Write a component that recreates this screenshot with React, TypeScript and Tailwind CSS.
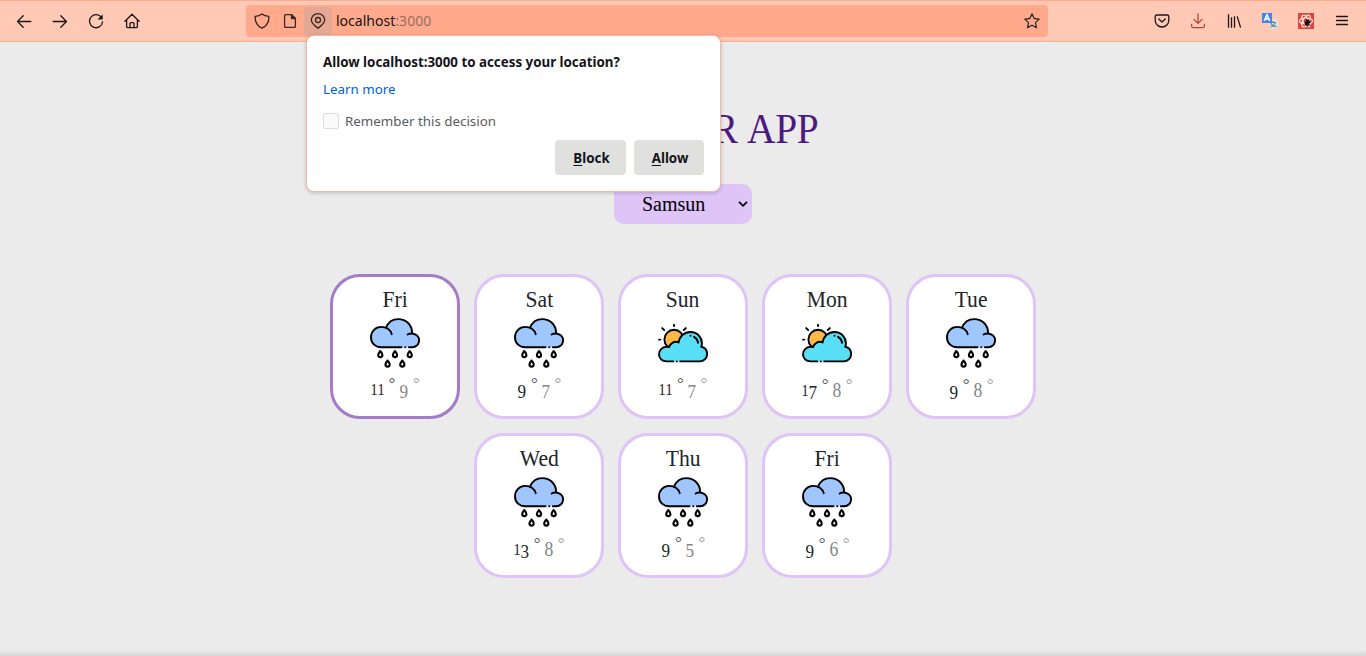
import type { ReactNode } from 'react';

type Kind = 'rain' | 'cloudy';
type Day = { name: string; kind: Kind; high: string; low: string; active?: boolean };

const days: Day[] = [
  { name: 'Fri', kind: 'rain', high: '11', low: '9', active: true },
  { name: 'Sat', kind: 'rain', high: '9', low: '7' },
  { name: 'Sun', kind: 'cloudy', high: '11', low: '7' },
  { name: 'Mon', kind: 'cloudy', high: '17', low: '8' },
  { name: 'Tue', kind: 'rain', high: '9', low: '8' },
  { name: 'Wed', kind: 'rain', high: '13', low: '8' },
  { name: 'Thu', kind: 'rain', high: '9', low: '5' },
  { name: 'Fri', kind: 'rain', high: '9', low: '6' },
];

function Icon({ children, className = '' }: { children: ReactNode; className?: string }) {
  return (
    <svg
      viewBox="0 0 16 16"
      className={`size-4 shrink-0 ${className}`}
      fill="none"
      stroke="currentColor"
      strokeWidth="1.3"
      strokeLinecap="round"
      strokeLinejoin="round"
    >
      {children}
    </svg>
  );
}

function RainIcon() {
  return (
    <svg viewBox="0 0 50 50" className="size-[50px]" fill="none" stroke="#000" strokeWidth="1.9" strokeLinecap="round">
      <path
        d="M11 29.2C5 29.2 1 25 1 19.3 1 13.3 5.500 8.900 11.200 8.900c1.700 0 3.300.3 4.800 1C18 4.500 22.500 1.100 28.300 1.100c7.800 0 13.800 5.900 13.800 13.700v.700c4.300 0 7 2.900 7 6.700 0 4.100-3 7-7 7z"
        fill="#9fc6ff"
        stroke="none"
      />
      <path d="M31.500 29.200H11C5 29.200 1 25 1 19.300 1 13.300 5.500 8.900 11.200 8.900c5.500 0 9.700 3 10.500 7.300" />
      <path d="M16 9.900C18 4.500 22.500 1.100 28.300 1.100c7.800 0 13.800 5.900 13.800 13.700" />
      <path d="M37.600 16.500c4.800-2.600 11.500.2 11.500 5.700 0 4.100-3 7-7 7h-3.200M35.200 29.200h.1" />
      {[
        [10.3, 33],
        [25, 33],
        [39.7, 33],
        [17.6, 42.5],
        [32.3, 42.5],
      ].map(([x, y]) => (
        <path
          key={x}
          transform={`translate(${x} ${y})`}
          d="M0 0C-.9 1.400-2.100 2.700-2.100 4a2.100 2.100 0 0 0 4.200 0C2.100 2.700.900 1.400 0 0Z"
          fill="#fff"
          strokeWidth="2.1"
          strokeLinejoin="round"
        />
      ))}
    </svg>
  );
}

function CloudyIcon() {
  return (
    <svg viewBox="0 0 50 50" className="size-[50px]" fill="none" stroke="#000" strokeWidth="1.9" strokeLinecap="round">
      <circle cx="16" cy="21.400" r="9.600" fill="#ffb947" />
      <path d="M16 6.800v1.300M4.200 10.100l2 2M27.800 10.100l-2 2M1 21.600h1.400" />
      <path
        d="M8.500 43.400C4 43.400 1 40.200 1 36.300s3-7.500 7.500-7.500c1 0 1.700.1 2.500.4C12 25 17 22.500 20.600 24.500 21.600 18 26.500 14 32.500 14c6.700 0 11.400 5 11.400 11.500 0 1.200-.1 2.200-.4 3.300 3.300.500 5.600 3.400 5.600 7.200 0 4.200-3.300 7.400-7.500 7.400z"
        fill="#59dff5"
        stroke="none"
      />
      <path
        d="M22.200 43.400h19.400c4.200 0 7.500-3.200 7.500-7.400 0-3.700-2.400-6.500-5.800-7.200.4-1 .6-2.100.6-3.300C43.900 19 39.200 14 32.500 14c-6 0-10.900 4-11.900 10.500C17 22.500 12 25 11 29.200c-.8-.3-1.500-.4-2.500-.4C4 28.800 1 32.400 1 36.300s3 7.100 7.500 7.100h6.800"
        strokeLinejoin="round"
      />
      <path d="M18.700 43.400h.1M32.500 17.800h.1M36 18.800c2.200 1.200 3.800 3.300 4.100 6" />
    </svg>
  );
}

const digitClass: Record<string, string> = {
  '1': 'text-[16px] w-[6.6px] -translate-y-px',
  '3': 'text-[19.5px] w-[8.5px] translate-y-[2px]',
  '5': 'text-[19.5px] w-[8.5px] translate-y-[2px]',
  '6': 'text-[20px] w-[9px]',
  '7': 'text-[19.5px] w-[8.5px] translate-y-[2px]',
  '8': 'text-[20px] w-[9px]',
  '9': 'text-[19.5px] w-[9.5px] translate-y-[2px]',
};

function Temp({ value, className }: { value: string; className: string }) {
  return (
    <span className={`flex items-baseline ${className}`}>
      {value.split('').map((c, i) => (
        <span key={i} className={`flex justify-center ${digitClass[c]}`}>
          <span className="scale-x-[0.88]">{c}</span>
        </span>
      ))}
      <span className="ml-[5px] mr-[4px] flex w-[6px] -translate-y-[7px] justify-center text-[17px] opacity-80">°</span>
    </span>
  );
}

function Card({ day }: { day: Day }) {
  return (
    <article
      className={`flex h-[145px] w-[130px] flex-col items-center rounded-[30px] border-[3px] bg-white ${
        day.active ? 'border-[#a37bc8]' : 'border-[#dec4f7]'
      }`}
    >
      <h2 className="mt-[7px] h-[34px] scale-x-[0.96] text-[22.5px] leading-[31px] text-[#212529]">{day.name}</h2>
      {day.kind === 'rain' ? <RainIcon /> : <CloudyIcon />}
      <div className="mt-[7px] flex h-[30px] items-baseline pl-[4px] leading-[30px]">
        <Temp value={day.high} className="text-[#212529]" />
        <Temp value={day.low} className="text-[#858585]" />
      </div>
    </article>
  );
}

function Toolbar() {
  return (
    <header className="flex h-[42px] shrink-0 items-center border-y border-t-[#ffaa8d] border-b-[#ffae92] bg-[#ffc9b6] text-[#1d1614]">
      <div className="flex w-[246px] gap-5 pl-4">
        <Icon><path d="M14.800 8.500H1.500M7.200 2.800 1.500 8.500l5.700 5.700" /></Icon>
        <Icon><path d="M1.200 8.500h13.300M8.800 2.800l5.700 5.700-5.700 5.700" /></Icon>
        <Icon>
          <path d="M13.600 4.800A6.500 6.500 0 1 0 14.500 9" />
          <path d="M14.700 1.300v5.100H9.600z" fill="currentColor" stroke="none" />
        </Icon>
        <Icon><path d="M.9 8.300 8 1.300l7.100 7M2.600 6.900v6.500c0 .700.500 1.200 1.200 1.200h8.400c.7 0 1.200-.5 1.200-1.200V6.900M6 14.500V10.600c0-.6.400-1 1-1h2c.600 0 1 .4 1 1v3.900" /></Icon>
      </div>
      <div className="flex h-8 w-[802px] items-center rounded bg-[#ffaa8d]">
        <Icon className="ml-2 text-[#3b2721]"><path d="M8 .9c1.700 1.500 4 2.300 6.900 2.500.2 5.700-2 9.400-6.900 11.700C3.100 12.800.9 9.100 1.100 3.400 4 3.200 6.300 2.400 8 .9Z" /></Icon>
        <Icon className="ml-3 text-[#3b2721]">
          <path d="M9.500 1.600H3.800c-.7 0-1.200.5-1.200 1.200v10.400c0 .7.5 1.200 1.200 1.200h8.400c.7 0 1.200-.5 1.200-1.200V5.500z" />
          <path d="M9.500 1.600v3.900h3.900z" fill="currentColor" />
        </Icon>
        <span className="ml-[6px] flex h-7 w-7 items-center justify-center rounded bg-[#e5a894]">
          <Icon className="text-[#3b2721]">
            <path d="M8 15.300C4.300 12.300 1.300 10.300 1.300 7A6.700 6.300 0 0 1 14.700 7c0 3.300-3 5.300-6.700 8.300Z" />
            <circle cx="8" cy="7" r="2.500" />
          </Icon>
        </span>
        <span className="ml-1 text-[14.05px] leading-5 text-[#20120e]">
          localhost<span className="text-[#9b6d5d]">:3000</span>
        </span>
        <Icon className="ml-auto mr-2 text-[#3b2721]"><path d="m8 .9 2.200 4.600 5 .6-3.700 3.500 1 5L8 12.200l-4.500 2.400 1-5L.8 6.100l5-.6z" /></Icon>
      </div>
      <div className="ml-auto flex gap-5 pr-4">
        <Icon>
          <path d="M2.800 2h10.400c.9 0 1.600.7 1.600 1.600v3.600a6.800 6.800 0 0 1-13.600 0V3.600C1.200 2.700 1.900 2 2.800 2Z" />
          <path d="m4.800 6 3.200 3 3.200-3" />
        </Icon>
        <Icon className="text-[#b1482c]"><path d="M8 .8v9.400M4 6.400l4 4 4-4M1.600 11.500v1.600c0 .900.600 1.500 1.500 1.500h9.800c.9 0 1.500-.6 1.500-1.500v-1.600" /></Icon>
        <Icon><path d="M2.500 1.200v13.500M5.500 4.200v10.500M8.500 3.200v11.500M11.200 3.400l3.400 11.200" strokeLinecap="butt" /></Icon>
        <svg viewBox="0 0 16 16" className="size-4">
          <path d="M6 6h9a1 1 0 0 1 1 1v9H8z" fill="#dce1df" />
          <path d="M8 9.500h6M11 8v1.500M13 9.500c-.5 3-2 4-4.500 4.500M9 10c.5 2 2.500 3.500 5.500 3.500" fill="none" stroke="#658996" strokeWidth="1.200" />
          <path d="M0 0h10v10H0z" fill="#4285f4" />
          <path d="M2.300 7.700 5 1.900l2.700 5.800M3.300 5.900h3.400" fill="none" stroke="#fff" strokeWidth="1.500" />
        </svg>
        <svg viewBox="0 0 16 16" className="size-4">
          <path d="M0 0h16v16H0z" fill="#dc4638" />
          <g fill="none" stroke="#f8dddd" strokeWidth="1.200">
            <ellipse cx="8" cy="8" rx="6.500" ry="2.900" />
            <ellipse cx="8" cy="8" rx="6.500" ry="2.900" transform="rotate(60 8 8)" />
            <ellipse cx="8" cy="8" rx="6.500" ry="2.900" transform="rotate(120 8 8)" />
          </g>
          <ellipse cx="9.300" cy="9.800" rx="2.300" ry="3.200" fill="#1c1412" transform="rotate(35 9.300 9.800)" />
          <path d="m6.500 8.500 6 4M8 7l5 2.500M7 11l3.500 3M8.500 7 7.500 5.500M10 7.500l1-1.500" stroke="#1c1412" strokeWidth=".8" />
        </svg>
        <Icon><path d="M2.500 3.500h11M2.500 7.500h11M2.500 11.500h11" /></Icon>
      </div>
    </header>
  );
}

function PermissionPopup() {
  return (
    <section className="absolute left-[306px] top-[35px] z-10 flex h-[157px] w-[415px] flex-col rounded-lg border border-[#f5b7a2] bg-white px-4 pt-4 text-[#15141a] shadow-[0_1px_4px_rgba(0,0,0,0.2)]">
      <h3 className="h-[20px] text-[13.33px] font-bold leading-5 whitespace-nowrap">
        Allow localhost:3000 to access your location?
      </h3>
      <a className="mt-[7px] h-5 text-[13.33px] leading-5 text-[#0061e0]">Learn more</a>
      <label className="mt-[12px] flex h-5 items-center gap-[6px] text-[13.33px] leading-5 text-[#5b5b5f]">
        <span className="size-4 rounded-[2px] border border-[#dedede] bg-[#fafafa]" />
        Remember this decision
      </label>
      <div className="mt-[9px] flex justify-end gap-2 text-[13.33px] font-bold">
        <button className="h-[35px] w-[71px] rounded bg-[#e0e0de] pl-[2px] pt-[2px]"><span className="underline underline-offset-2">B</span>lock</button>
        <button className="h-[35px] w-[70px] rounded bg-[#e0e0de] pl-[2px] pt-[2px]"><span className="underline underline-offset-2">A</span>llow</button>
      </div>
    </section>
  );
}

export default function App() {
  return (
    <div className="relative flex h-[656px] w-[1366px] flex-col overflow-hidden bg-[#ebebeb] font-['Noto_Sans',sans-serif]">
      <Toolbar />
      <PermissionPopup />
      <main className="flex flex-1 flex-col items-center font-['Liberation_Serif',serif]">
        <h1 className="mt-[57px] h-[60px] scale-x-[0.927] text-[42.5px] leading-[60px] tracking-[-0.4px] text-[#4b1a80] [font-kerning:none]">
          WEATHER APP
        </h1>
        <button className="mt-[25px] flex h-10 w-[138px] items-center justify-between rounded-[10px] bg-[#dec4f7] pl-[28px] pr-[4px] text-[20px] text-black">
          Samsun
          <svg viewBox="0 0 10 6" className="h-[6px] w-[10px]" fill="none" stroke="currentColor" strokeWidth="1.700">
            <path d="m1 .8 4 4 4-4" />
          </svg>
        </button>
        <div className="mt-[50px] flex w-[720px] flex-wrap justify-center gap-[14px]">
          {days.map((day, i) => (
            <Card key={i} day={day} />
          ))}
        </div>
      </main>
      <div className="h-[6px] shrink-0 bg-linear-to-b from-[#ebebeb] to-[#d5d5d5]" />
    </div>
  );
}
